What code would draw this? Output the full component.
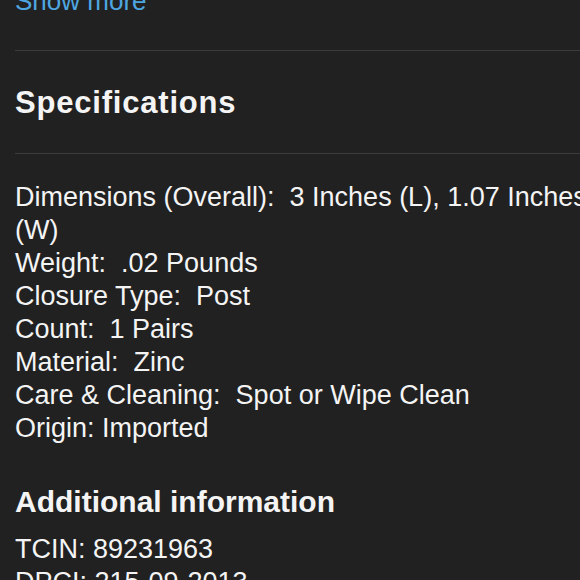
import React from 'react';

const specs: string[] = [
  'Dimensions (Overall):  3 Inches (L), 1.07 Inches (W)',
  'Weight:  .02 Pounds',
  'Closure Type:  Post',
  'Count:  1 Pairs',
  'Material:  Zinc',
  'Care & Cleaning:  Spot or Wipe Clean',
  'Origin: Imported',
];

const extra: string[] = ['TCIN: 89231963', 'DPCI: 215-09-2013'];

const App: React.FC = () => {
  return (
    <div
      className="w-[580px] h-[580px] overflow-hidden bg-[#212121] text-[#f4f4f4] pl-[15px]"
      style={{ fontFamily: '"Liberation Sans", Arial, sans-serif' }}
    >
      {/* Show more link, scrolled partly out of view */}
      <div className="-mt-[15px] text-[26px] leading-[33px] text-[#4ea6e0] whitespace-pre">Show more</div>

      <div className="mt-[32px] h-px bg-[#3c3c3c]" />

      <h2 className="pt-[34px] pb-[32px] text-[31px] leading-[36px] font-bold tracking-[0.8px]">Specifications</h2>

      <div className="h-px bg-[#3c3c3c]" />

      <div className="pt-[27px] text-[27px] leading-[33px] whitespace-pre-wrap -mr-[30px]">
        {specs.map((s) => (
          <p key={s}>{s}</p>
        ))}
      </div>

      <h2 className="mt-[39px] text-[30px] leading-[36px] font-bold">Additional information</h2>

      <div className="mt-[13px] text-[27px] leading-[33px]">
        {extra.map((s) => (
          <p key={s}>{s}</p>
        ))}
      </div>
    </div>
  );
};

export default App;
